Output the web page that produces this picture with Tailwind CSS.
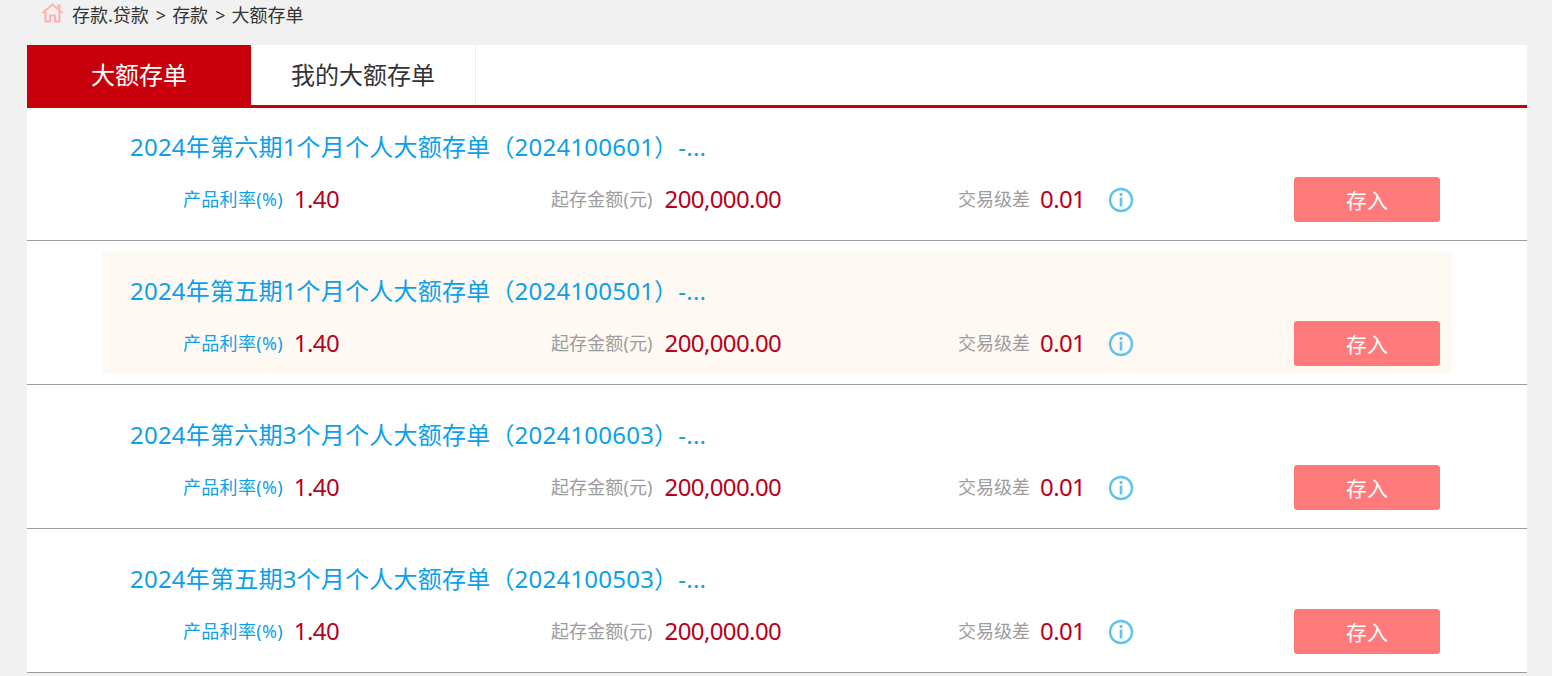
<!DOCTYPE html>
<html lang="zh-CN">
<head>
    <meta charset="UTF-8">
    <meta name="viewport" content="width=device-width, initial-scale=1.0">
    <title>大额存单</title>
    <script src="https://cdn.jsdelivr.net/npm/@tailwindcss/browser@4"></script>
</head>
<body class="bg-[#f1f1f1] h-[676px] overflow-hidden font-['Noto_Sans','Noto_Sans_CJK_SC',sans-serif]">
    <!-- Breadcrumb -->
    <div class="h-[45px] pl-[41px] flex items-start text-[#333333] text-[18px] leading-[31px]">
        <svg class="w-[23px] h-[22px] mt-[2px]" viewBox="0 0 23 22" fill="none" stroke="#ffb0b0" stroke-width="2">
            <path d="M1.5 11 11.5 2.5 21.5 11"/>
            <path d="M4.5 9.5V19.5H9V13.5H14V19.5H18.5V9.5"/>
            <path d="M16 3.5H18.5V7"/>
        </svg>
        <span class="ml-[8px]">存款.贷款</span>
        <span class="ml-[7px]">&gt;</span>
        <span class="ml-[6px]">存款</span>
        <span class="ml-[7px]">&gt;</span>
        <span class="ml-[6px]">大额存单</span>
    </div>

    <div class="mx-[27px] w-[1500px] bg-white">
        <!-- Tabs -->
        <div class="flex h-[63px] border-b-[3px] border-[#c8000b] text-[24px] leading-[60px] text-center">
            <div class="w-[224px] bg-[#c8000b] text-white">大额存单</div>
            <div class="w-[225px] text-[#333333] border-r border-[#eeeeee]">我的大额存单</div>
        </div>

        <!-- Product list -->
        <div>
            <div class="border-b border-[#9c9c9c] pb-[11px]">
                <div class="mx-[75px] h-[121px] pl-[28px] pr-[12px] pt-[19px]">
                    <div class="text-[24px] leading-[40px] tracking-[0.22px] text-[#0d9fe8]">2024年第六期1个月个人大额存单（2024100601）-...</div>
                    <div class="flex items-center mt-[10px] pl-[53px]">
                        <div class="w-[368px] flex items-center gap-[11px]">
                            <span class="text-[18px] tracking-[0.3px] text-[#0d9fe8]">产品利率(%)</span>
                            <span class="text-[24px] tracking-[-0.6px] pb-[2px] text-[#b80020]">1.40</span>
                        </div>
                        <div class="w-[407px] flex items-center gap-[12px]">
                            <span class="text-[18px] tracking-[0.1px] text-[#9c9c9c]">起存金额(元)</span>
                            <span class="text-[24px] tracking-[-0.6px] pb-[2px] text-[#b80020]">200,000.00</span>
                        </div>
                        <div class="w-[336px] flex items-center gap-[10px]">
                            <span class="text-[18px] text-[#9c9c9c]">交易级差</span>
                            <span class="text-[24px] tracking-[-0.6px] pb-[2px] text-[#b80020]">0.01</span>
                            <svg class="w-[26px] h-[26px] ml-[13px]" viewBox="0 0 26 26" fill="none">
                                <circle cx="13" cy="13" r="11" stroke="#5cc4f2" stroke-width="2.4"/>
                                <rect x="11.7" y="6" width="2.6" height="3" fill="#5cc4f2"/>
                                <rect x="11.7" y="10.5" width="2.6" height="9" fill="#5cc4f2"/>
                            </svg>
                        </div>
                        <button class="w-[146px] h-[45px] pt-[2px] rounded-[3px] bg-[#ff7a7a] text-white text-[21px]">存入</button>
                    </div>
                </div>
            </div>

            <div class="border-b border-[#9c9c9c] py-[11px]">
                <div class="mx-[75px] h-[121px] pl-[28px] pr-[12px] pt-[19px] bg-[#fff9f3]">
                    <div class="text-[24px] leading-[40px] tracking-[0.22px] text-[#0d9fe8]">2024年第五期1个月个人大额存单（2024100501）-...</div>
                    <div class="flex items-center mt-[10px] pl-[53px]">
                        <div class="w-[368px] flex items-center gap-[11px]">
                            <span class="text-[18px] tracking-[0.3px] text-[#0d9fe8]">产品利率(%)</span>
                            <span class="text-[24px] tracking-[-0.6px] pb-[2px] text-[#b80020]">1.40</span>
                        </div>
                        <div class="w-[407px] flex items-center gap-[12px]">
                            <span class="text-[18px] tracking-[0.1px] text-[#9c9c9c]">起存金额(元)</span>
                            <span class="text-[24px] tracking-[-0.6px] pb-[2px] text-[#b80020]">200,000.00</span>
                        </div>
                        <div class="w-[336px] flex items-center gap-[10px]">
                            <span class="text-[18px] text-[#9c9c9c]">交易级差</span>
                            <span class="text-[24px] tracking-[-0.6px] pb-[2px] text-[#b80020]">0.01</span>
                            <svg class="w-[26px] h-[26px] ml-[13px]" viewBox="0 0 26 26" fill="none">
                                <circle cx="13" cy="13" r="11" stroke="#5cc4f2" stroke-width="2.4"/>
                                <rect x="11.7" y="6" width="2.6" height="3" fill="#5cc4f2"/>
                                <rect x="11.7" y="10.5" width="2.6" height="9" fill="#5cc4f2"/>
                            </svg>
                        </div>
                        <button class="w-[146px] h-[45px] pt-[2px] rounded-[3px] bg-[#ff7a7a] text-white text-[21px]">存入</button>
                    </div>
                </div>
            </div>

            <div class="border-b border-[#9c9c9c] py-[11px]">
                <div class="mx-[75px] h-[121px] pl-[28px] pr-[12px] pt-[19px]">
                    <div class="text-[24px] leading-[40px] tracking-[0.22px] text-[#0d9fe8]">2024年第六期3个月个人大额存单（2024100603）-...</div>
                    <div class="flex items-center mt-[10px] pl-[53px]">
                        <div class="w-[368px] flex items-center gap-[11px]">
                            <span class="text-[18px] tracking-[0.3px] text-[#0d9fe8]">产品利率(%)</span>
                            <span class="text-[24px] tracking-[-0.6px] pb-[2px] text-[#b80020]">1.40</span>
                        </div>
                        <div class="w-[407px] flex items-center gap-[12px]">
                            <span class="text-[18px] tracking-[0.1px] text-[#9c9c9c]">起存金额(元)</span>
                            <span class="text-[24px] tracking-[-0.6px] pb-[2px] text-[#b80020]">200,000.00</span>
                        </div>
                        <div class="w-[336px] flex items-center gap-[10px]">
                            <span class="text-[18px] text-[#9c9c9c]">交易级差</span>
                            <span class="text-[24px] tracking-[-0.6px] pb-[2px] text-[#b80020]">0.01</span>
                            <svg class="w-[26px] h-[26px] ml-[13px]" viewBox="0 0 26 26" fill="none">
                                <circle cx="13" cy="13" r="11" stroke="#5cc4f2" stroke-width="2.4"/>
                                <rect x="11.7" y="6" width="2.6" height="3" fill="#5cc4f2"/>
                                <rect x="11.7" y="10.5" width="2.6" height="9" fill="#5cc4f2"/>
                            </svg>
                        </div>
                        <button class="w-[146px] h-[45px] pt-[2px] rounded-[3px] bg-[#ff7a7a] text-white text-[21px]">存入</button>
                    </div>
                </div>
            </div>

            <div class="border-b border-[#9c9c9c] py-[11px]">
                <div class="mx-[75px] h-[121px] pl-[28px] pr-[12px] pt-[19px]">
                    <div class="text-[24px] leading-[40px] tracking-[0.22px] text-[#0d9fe8]">2024年第五期3个月个人大额存单（2024100503）-...</div>
                    <div class="flex items-center mt-[10px] pl-[53px]">
                        <div class="w-[368px] flex items-center gap-[11px]">
                            <span class="text-[18px] tracking-[0.3px] text-[#0d9fe8]">产品利率(%)</span>
                            <span class="text-[24px] tracking-[-0.6px] pb-[2px] text-[#b80020]">1.40</span>
                        </div>
                        <div class="w-[407px] flex items-center gap-[12px]">
                            <span class="text-[18px] tracking-[0.1px] text-[#9c9c9c]">起存金额(元)</span>
                            <span class="text-[24px] tracking-[-0.6px] pb-[2px] text-[#b80020]">200,000.00</span>
                        </div>
                        <div class="w-[336px] flex items-center gap-[10px]">
                            <span class="text-[18px] text-[#9c9c9c]">交易级差</span>
                            <span class="text-[24px] tracking-[-0.6px] pb-[2px] text-[#b80020]">0.01</span>
                            <svg class="w-[26px] h-[26px] ml-[13px]" viewBox="0 0 26 26" fill="none">
                                <circle cx="13" cy="13" r="11" stroke="#5cc4f2" stroke-width="2.4"/>
                                <rect x="11.7" y="6" width="2.6" height="3" fill="#5cc4f2"/>
                                <rect x="11.7" y="10.5" width="2.6" height="9" fill="#5cc4f2"/>
                            </svg>
                        </div>
                        <button class="w-[146px] h-[45px] pt-[2px] rounded-[3px] bg-[#ff7a7a] text-white text-[21px]">存入</button>
                    </div>
                </div>
            </div>
        </div>
    </div>
</body>
</html>
